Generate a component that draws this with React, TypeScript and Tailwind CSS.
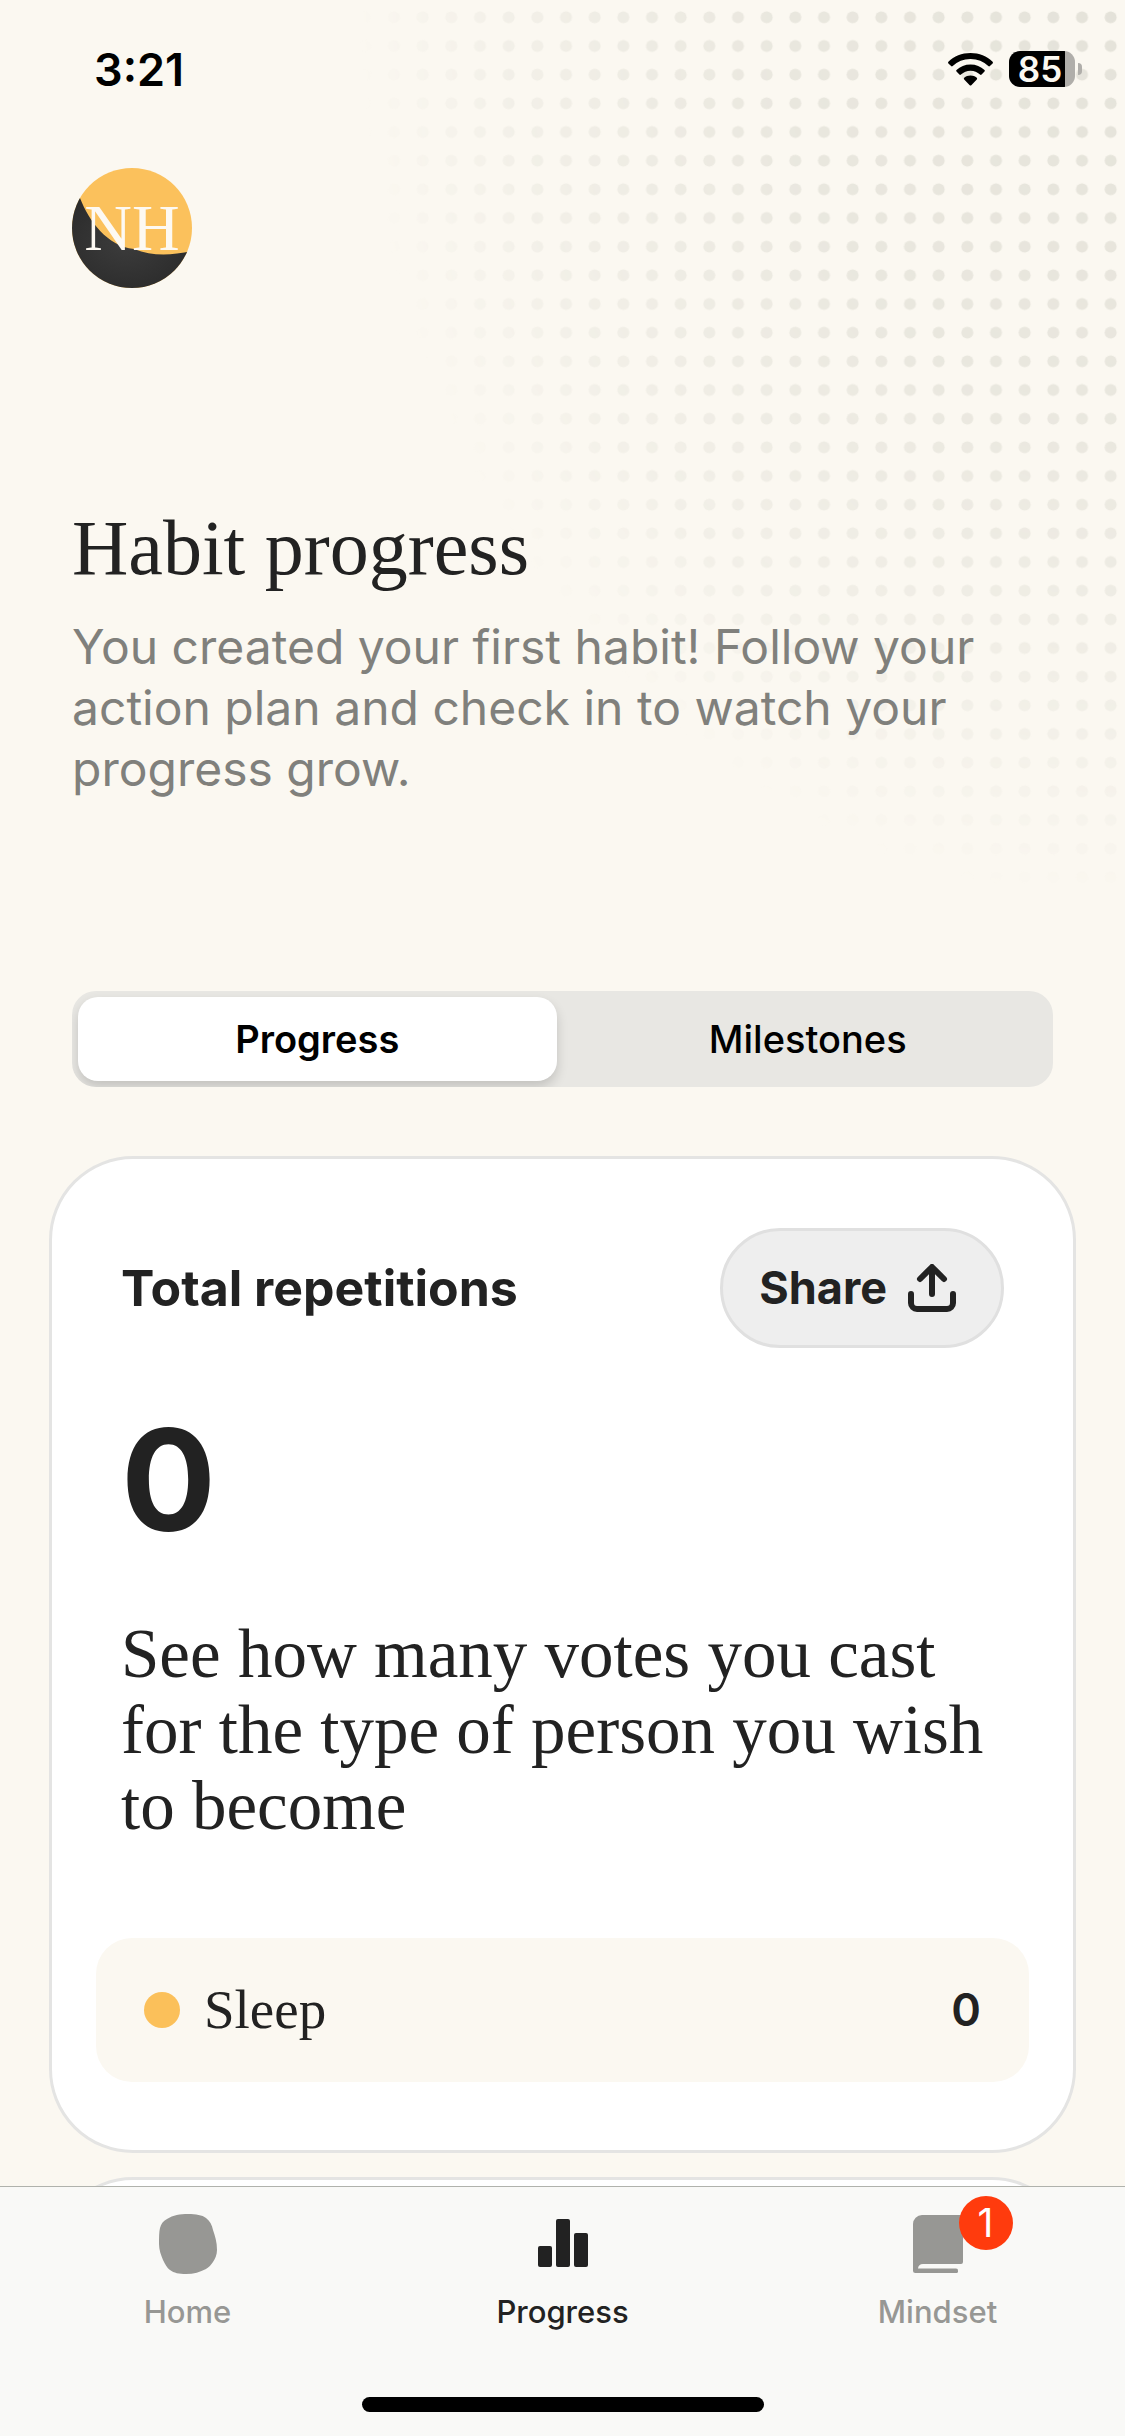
import { useState } from 'react';
import clsx from 'clsx';

interface Habit {
  id: number;
  name: string;
  count: number;
}

const HABITS: Habit[] = [{ id: 1, name: 'Sleep', count: 0 }];

const SECTIONS = ['Progress', 'Milestones'];

function DotPattern() {
  return (
    <svg
      className="pointer-events-none absolute right-0 top-0 h-[900px] w-[860px]"
      viewBox="0 0 2580 2700"
      aria-hidden="true"
    >
      <defs>
        <pattern id="dots" y="9" width="86" height="86" patternUnits="userSpaceOnUse">
          <circle cx="43" cy="43" r="18" fill="#e4e2d9" />
        </pattern>
        <radialGradient
          id="fade"
          gradientUnits="userSpaceOnUse"
          cx="0"
          cy="0"
          r="1"
          gradientTransform="translate(2580 0) scale(2300 2700)"
        >
          <stop offset="0" stopColor="#fff" />
          <stop offset="0.45" stopColor="#fff" stopOpacity="0.78" />
          <stop offset="0.8" stopColor="#fff" stopOpacity="0.38" />
          <stop offset="1" stopColor="#fff" stopOpacity="0" />
        </radialGradient>
        <mask id="dots-mask">
          <rect width="2580" height="2700" fill="url(#fade)" />
        </mask>
      </defs>
      <rect width="2580" height="2700" fill="url(#dots)" mask="url(#dots-mask)" />
    </svg>
  );
}

function WifiIcon() {
  return (
    <svg className="h-[33px] w-[45px]" viewBox="0 0 45 33" aria-hidden="true">
      <path d="M22.5 0C31.2 0 39 3.2 44.6 8.8c.5.5.5 1.1 0 1.6L41.9 13c-.5.5-1.1.5-1.6 0A25.3 25.3 0 0 0 22.5 5.9 25.3 25.3 0 0 0 4.7 13c-.5.5-1.1.5-1.6 0L.4 10.4c-.5-.5-.5-1.1 0-1.6C6 3.2 13.8 0 22.5 0Z" />
      <path d="M22.5 11.5c5.5 0 10.3 2 14 5.5.5.5.5 1.1 0 1.6l-2.9 2.9c-.5.5-1.1.5-1.6 0a13.7 13.7 0 0 0-19 0c-.5.5-1.1.5-1.6 0l-2.9-2.900c-.5-.5-.5-1.1 0-1.6 3.7-3.5 8.5-5.5 14-5.5Z" />
      <path d="M22.5 22.6c2.5 0 4.6.8 6.3 2.2.5.5.5 1.1 0 1.6l-5.5 5.8c-.5.5-1.1.5-1.6 0l-5.5-5.8c-.5-.5-.5-1.1 0-1.6 1.7-1.4 3.8-2.2 6.3-2.2Z" />
    </svg>
  );
}

function Battery() {
  return (
    <div className="flex items-center gap-[3px]">
      <div className="flex h-9 w-[66px] items-center justify-center rounded-[11px] bg-[linear-gradient(to_right,#000_56px,#b0aeaa_56px)] pr-1 text-[35px] font-semibold leading-none text-[#fbf8f1]">
        85
      </div>
      <div className="h-3 w-1 rounded-r-full bg-[#b0aeaa]" />
    </div>
  );
}

function Avatar() {
  return (
    <button
      type="button"
      aria-label="Profile"
      className="relative flex size-[120px] items-center justify-center overflow-hidden rounded-full"
    >
      <svg className="absolute inset-0 size-full" viewBox="0 0 120 120" aria-hidden="true">
        <defs>
          <radialGradient id="shade" cx="0.45" cy="0.5" r="0.6">
            <stop offset="0" stopColor="#3c3c3c" />
            <stop offset="1" stopColor="#2b2b2b" />
          </radialGradient>
        </defs>
        <rect width="120" height="120" fill="#fbc15c" />
        <path d="M8 30C17 53 35 78 62 81 80 88 97 88 120 83V120H0V30Z" fill="url(#shade)" />
      </svg>
      <span className="relative font-['Liberation_Serif',serif] text-[66px] leading-none text-[#fdf9f2]">NH</span>
    </button>
  );
}

function ShareIcon() {
  return (
    <svg
      className="size-12"
      viewBox="0 0 48 48"
      fill="none"
      stroke="currentColor"
      strokeWidth="6"
      strokeLinecap="round"
      strokeLinejoin="round"
      aria-hidden="true"
    >
      <path d="M24 30V4M12 15 24 3l12 12" />
      <path d="M3 30v9a6 6 0 0 0 6 6h30a6 6 0 0 0 6-6v-9" />
    </svg>
  );
}

function HomeIcon() {
  return (
    <svg className="h-[60px] w-[58px]" viewBox="0 0 58 60" fill="currentColor" aria-hidden="true">
      <path d="M29 0C37 0 43 1 47 4 51 7 53 11 54 16 56 22 58 28 58 36 58 41 56 45 54 48 52 51 50 53 47 55 41 58 35 60 27 60 20 60 15 59 11 56 8 54 6 50 4 46 2 41 0 36 0 30 0 24 0 18 1 14 2 10 4 7 8 5 14 1 21 0 29 0Z" />
    </svg>
  );
}

function ProgressIcon() {
  return (
    <svg className="h-[60px] w-[50px]" viewBox="0 0 50 60" fill="currentColor" aria-hidden="true">
      <rect x="0" y="32" width="14" height="21" rx="2" />
      <rect x="18" y="5" width="14" height="48" rx="2" />
      <rect x="36" y="19" width="14" height="34" rx="2" />
    </svg>
  );
}

function MindsetIcon() {
  return (
    <svg className="h-[60px] w-[50px]" viewBox="0 0 50 60" fill="currentColor" aria-hidden="true">
      <path d="M9 1H50V48a2 2 0 0 1-2 2H10a5 5 0 0 0-5 4.5H43a2 2 0 0 1 2 2.2 2 2 0 0 1-2 2.3H2.5A2.5 2.5 0 0 1 0 56.5V10A9 9 0 0 1 9 1Z" />
    </svg>
  );
}

const TABS = [
  { label: 'Home', icon: HomeIcon, badge: 0 },
  { label: 'Progress', icon: ProgressIcon, badge: 0 },
  { label: 'Mindset', icon: MindsetIcon, badge: 1 },
];

export default function App() {
  const [section, setSection] = useState('Progress');

  return (
    <div className="relative flex h-screen flex-col overflow-hidden bg-[#fbf8f1] font-[Inter,sans-serif] text-[#222]">
      <DotPattern />

      <main className="relative flex-1 overflow-y-auto [scrollbar-width:none]">
        <div className="flex h-[138px] items-center justify-between pl-[94px] pr-[43px] text-black">
          <span className="text-[45px] font-semibold leading-none">3:21</span>
          <div className="flex items-center gap-4">
            <WifiIcon />
            <Battery />
          </div>
        </div>

        <header className="px-[72px] pt-[30px]">
          <Avatar />
          <h1 className="mt-[216px] font-['Liberation_Serif',serif] text-[78px] leading-[88px]">Habit progress</h1>
          <p className="mt-6 text-[48px] leading-[61px] text-[#80807c]">
            You created your first habit! Follow your action plan and check in to watch your progress grow.
          </p>
        </header>

        <div role="tablist" className="mx-[72px] mt-48 grid grid-cols-2 gap-3 overflow-hidden rounded-3xl bg-[#e8e7e3] p-1.5">
          {SECTIONS.map((name) => (
            <button
              key={name}
              type="button"
              role="tab"
              aria-selected={section === name}
              onClick={() => setSection(name)}
              className={clsx(
                'h-[84px] rounded-[20px] text-[38px] text-black',
                section === name ? 'bg-white font-semibold shadow-[0_6px_12px_rgba(0,0,0,0.16)]' : 'font-medium',
              )}
            >
              {name}
            </button>
          ))}
        </div>

        <section className="mx-[49px] mt-[69px] rounded-[84px] border-3 border-[#e4e4e3] bg-white px-11 pb-[68px] pt-[69px]">
          <div className="flex items-center justify-between px-[25px]">
            <h2 className="text-[50px] font-bold leading-none">Total repetitions</h2>
            <button
              type="button"
              className="flex h-[120px] items-center gap-[21px] rounded-full border-3 border-[#e0e0e0] bg-[#eee] pl-9 pr-[45px] text-[45px] font-bold"
            >
              Share
              <ShareIcon />
            </button>
          </div>
          <p className="mt-16 px-[25px] text-[141px] font-bold leading-[136px]">0</p>
          <p className="mt-[68px] px-[25px] font-['Liberation_Serif',serif] text-[69px] leading-[76px]">
            See how many votes you cast for the type of person you wish to become
          </p>
          <ul className="mt-[94px] space-y-6">
            {HABITS.map((habit) => (
              <li key={habit.id} className="flex h-36 items-center gap-6 rounded-[36px] bg-[#fbf8f1] px-12">
                <span className="size-9 rounded-full bg-[#fbc05a]" />
                <span className="font-['Liberation_Serif',serif] text-[55px]">{habit.name}</span>
                <span className="ml-auto text-[45px] font-semibold">{habit.count}</span>
              </li>
            ))}
          </ul>
        </section>

        <section className="mx-[49px] mt-6 h-60 rounded-[84px] border-3 border-[#e4e4e3] bg-white" />
      </main>

      <nav className="relative border-t border-[#b0b2ac] bg-[#f9f9f7] pb-6">
        <div className="grid grid-cols-3">
          {TABS.map((tab) => (
            <a
              key={tab.label}
              href={`#${tab.label.toLowerCase()}`}
              className={clsx(
                'flex flex-col items-center gap-4 pt-[27px] text-[31px] font-medium leading-[44px]',
                tab.label === 'Progress' ? 'text-[#222]' : 'text-[#979794]',
              )}
            >
              <span className="relative">
                <tab.icon />
                {tab.badge > 0 && (
                  <span className="absolute -top-[18px] left-[46px] flex size-[54px] items-center justify-center rounded-full bg-[#ff3b0d] text-[39px] font-normal text-white">
                    {tab.badge}
                  </span>
                )}
              </span>
              {tab.label}
            </a>
          ))}
        </div>
        <div className="mx-auto mt-[63px] h-[15px] w-[402px] rounded-full bg-black" />
      </nav>
    </div>
  );
}
